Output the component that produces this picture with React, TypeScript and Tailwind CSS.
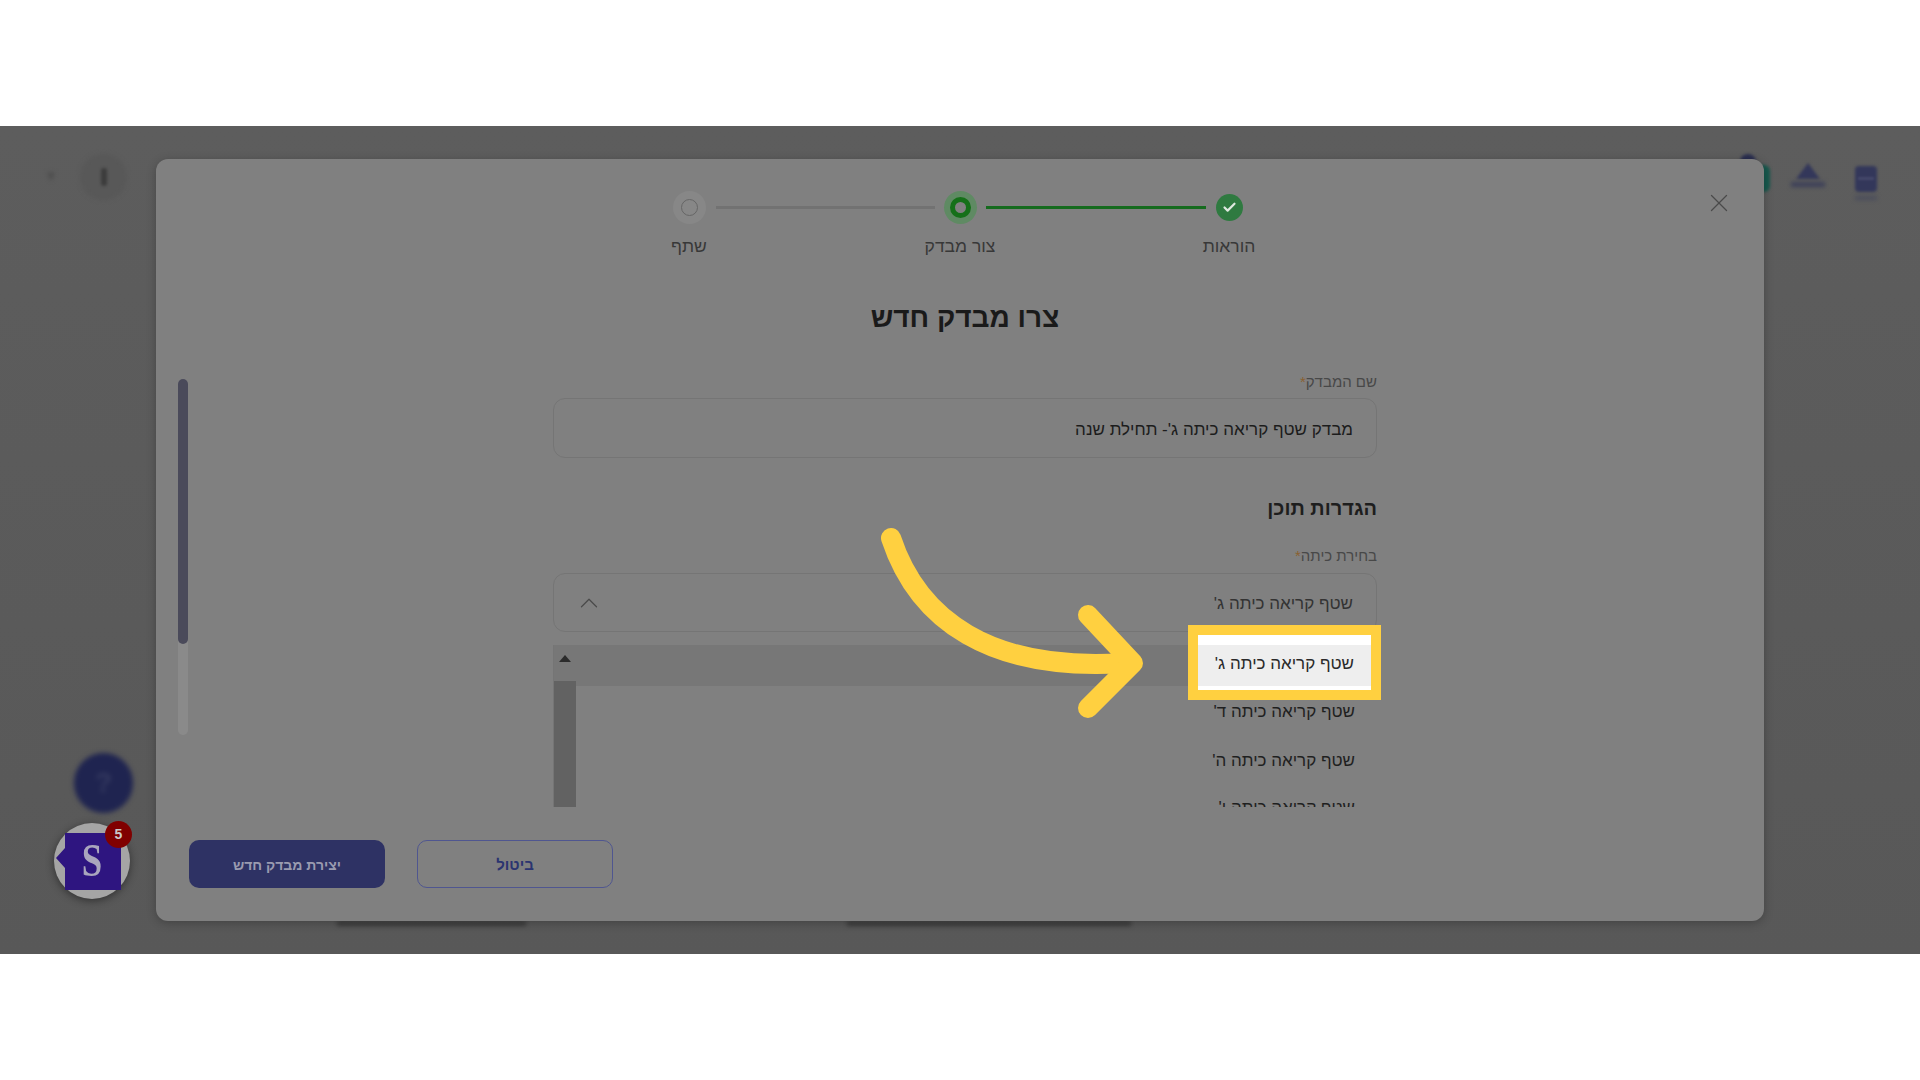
import { X, ChevronUp, Check } from "lucide-react";

const font = { fontFamily: '"Liberation Sans", "Open Sans", "Noto Sans", sans-serif' };

function Step({ label, kind, shift }: { label: string; kind: "todo" | "active" | "done"; shift?: string }) {
  return (
    <div className={`flex w-[50px] shrink-0 flex-col items-center ${shift ?? ""}`}>
      <div className="flex h-[33px] w-[33px] items-center justify-center">
        {kind === "todo" && (
          <div className="flex h-[33px] w-[33px] items-center justify-center rounded-full bg-[#878787]">
            <div className="h-[17px] w-[17px] rounded-full border border-[#666666]" />
          </div>
        )}
        {kind === "active" && (
          <div className="flex h-[33px] w-[33px] items-center justify-center rounded-full bg-[#5f8a63]">
            <div className="h-[21px] w-[21px] rounded-full border-[5px] border-[#157019] bg-[#808080]" />
          </div>
        )}
        {kind === "done" && (
          <div className="flex h-[27px] w-[27px] items-center justify-center rounded-full bg-[#2f7a40]">
            <Check size={15} strokeWidth={3.5} className="text-[#dfe8e0]" />
          </div>
        )}
      </div>
      <div dir="rtl" className="mt-[10px] whitespace-nowrap text-[17.5px] leading-6 text-[#383838]">{label}</div>
    </div>
  );
}

export default function App() {
  return (
    <div style={font} className="flex h-[1080px] w-[1920px] flex-col overflow-hidden bg-white">
      <div className="h-[126px] shrink-0" />
      <div className="relative h-[828px] shrink-0 overflow-hidden bg-gradient-to-b from-[#5d5d5d] to-[#585858]">
        {/* blurred page behind the dialog */}
        <div className="absolute left-[47px] top-[38px] h-[10px] w-[14px] text-[#4c4c4c] blur-[2px]">▾</div>
        <div className="absolute left-[80px] top-[28px] h-[46px] w-[47px] rounded-full bg-[#585858] blur-[2px]" />
        <div className="absolute left-[101px] top-[42px] h-[18px] w-[6px] rounded-full bg-[#3c3c3c] blur-[1.5px]" />
        <div className="absolute left-[1740px] top-[28px] h-[16px] w-[16px] rounded-full bg-[#2a2e50] blur-[1.5px]" />
        <div className="absolute left-[1750px] top-[39px] h-[27px] w-[20px] rounded-md bg-[#17594e] blur-[1.5px]" />
        <div className="absolute left-[1796px] top-[37px] h-0 w-0 border-x-[12px] border-b-[16px] border-x-transparent border-b-[#33375a] blur-[1.5px]" />
        <div className="absolute left-[1791px] top-[56px] h-[5px] w-[34px] bg-[#3c3f58] blur-[2px]" />
        <div className="absolute left-[1855px] top-[40px] h-[26px] w-[22px] rounded-sm bg-[#33375a] blur-[1.5px]" />
        <div className="absolute left-[1858px] top-[51px] h-[3px] w-[16px] bg-[#45486a] blur-[1px]" />
        <div className="absolute left-[1855px] top-[70px] h-[4px] w-[22px] bg-[#4a4d5c] blur-[2px]" />
        <div className="absolute left-[337px] top-[795px] h-[5px] w-[189px] bg-[#3c3c3c] blur-[2px]" />
        <div className="absolute left-[847px] top-[795px] h-[5px] w-[284px] bg-[#3c3c3c] blur-[2px]" />

        {/* dialog */}
        <div className="relative z-10 ml-[156px] mt-[33px] flex h-[762px] w-[1608px] flex-col rounded-[12px] bg-[#808080] shadow-[0_2px_10px_rgba(0,0,0,0.25)]">
          <X size={30} strokeWidth={1} className="absolute right-[30px] top-[29px] text-[#4a4a4a]" />
          <div className="absolute left-[22px] top-[220px] h-[356px] w-[10px] rounded-full bg-[#8a8a8a]">
            <div className="h-[265px] w-[10px] rounded-full bg-[#4a4a5a]" />
          </div>

          <div className="min-h-0 flex-1 overflow-hidden">
            <div className="ml-[508px] flex pt-[32px]">
              <Step label="שתף" kind="todo" />
              <div className="ml-[2px] mt-[15px] h-[3px] w-[219px] bg-[#727272]" />
              <Step label="צור מבדק" kind="active" />
              <div className="ml-px mt-[15px] h-[3px] w-[220px] bg-[#156b1e]" />
              <Step label="הוראות" kind="done" shift="-ml-[2px]" />
            </div>

            <div dir="rtl" className="ml-[397px] w-[824px]">
              <h1 className="mt-[40px] text-center text-[28px] font-bold leading-10 text-[#1a1a1a]">צרו מבדק חדש</h1>
              <div className="mt-[34px] text-[15px] leading-5 text-[#484848]">שם המבדק<span className="text-[#8a6030]">*</span></div>
              <div className="mt-[6px] flex h-[60px] items-center rounded-[12px] border border-[#757575] pr-[23px] pt-[4px] text-[17px] text-[#1c1c1c]">מבדק שטף קריאה כיתה ג'- תחילת שנה</div>
              <h2 className="mt-[36px] text-[20px] font-bold leading-7 text-[#1e1e1e]">הגדרות תוכן</h2>
              <div className="mt-[24px] text-[15px] leading-5 text-[#484848]">בחירת כיתה<span className="text-[#8a6030]">*</span></div>
              <div className="mt-[7px] flex h-[59px] items-center justify-between rounded-[12px] border border-[#757575] pl-[20px] pr-[23px] text-[17px] text-[#333333]">
                <span className="pt-[2px]">שטף קריאה כיתה ג'</span>
                <ChevronUp size={30} strokeWidth={1} className="text-[#4a4a4a]" />
              </div>

              <div className="mt-[13px] h-[200px] overflow-hidden border-l border-[#757575] text-[17px] text-[#1f1f1f]">
                <div className="flex h-[41px] items-center bg-[#777777] pr-[22px]">שטף קריאה כיתה ג'</div>
                <div className="mt-[2px] flex h-[48px] items-center pr-[22px]">שטף קריאה כיתה ד'</div>
                <div className="flex h-[48px] items-center pr-[22px] pt-[1px]">שטף קריאה כיתה ה'</div>
                <div className="flex h-[48px] items-center pr-[22px]">שטף קריאה כיתה ו'</div>
              </div>
            </div>
          </div>

          <div dir="ltr" className="flex h-[114px] shrink-0 gap-[32px] pl-[33px] pt-[33px]">
            <button className="h-[48px] w-[196px] rounded-[10px] bg-[#2e3264] pt-[2px] text-[14px] font-bold text-[#9a9bb0]">יצירת מבדק חדש</button>
            <button className="h-[48px] w-[196px] rounded-[10px] border border-[#4f5690] pt-[2px] text-[15px] font-bold text-[#2b3470]">ביטול</button>
          </div>

          {/* native scrollbar of the open list */}
          <div className="absolute left-[398px] top-[486px] flex h-[162px] w-[22px] flex-col bg-[#626262]">
            <div className="flex h-[36px] items-start justify-center bg-[#777777] pt-[10px]">
              <div className="h-0 w-0 border-x-[6px] border-b-[7px] border-x-transparent border-b-[#2b2b2b]" />
            </div>
          </div>
        </div>

        {/* widgets */}
        <div className="absolute left-[74px] top-[627px] z-20 flex h-[60px] w-[59px] items-center justify-center rounded-full bg-[#1f2450] text-[28px] font-bold text-[#353a60] blur-[2.5px]">?</div>
        <div className="absolute left-[54px] top-[697px] z-20 h-[76px] w-[76px] rounded-full bg-[#a5a5a5] shadow-[0_2px_8px_rgba(0,0,0,0.45)]">
          <svg viewBox="0 0 76 76" className="absolute inset-0 h-[76px] w-[76px]">
            <path d="M11 10 H67 V67 H11 V45 L2 35 L11 25 Z" fill="#2e1580" />
          </svg>
          <div className="absolute inset-0 flex scale-x-[0.8] items-center justify-center text-[46px] font-bold leading-none text-[#a9a5bd]" style={{ fontFamily: '"Liberation Serif", serif' }}>S</div>
          <div className="absolute right-[-2px] top-[-2px] flex h-[27px] w-[27px] items-center justify-center rounded-full bg-[#800000] text-[14px] font-bold text-[#c9c9c9]">5</div>
        </div>

        {/* tutorial callout */}
        <div dir="rtl" className="absolute left-[1188px] top-[499px] z-30 h-[75px] w-[193px] border-[10px] border-[#ffd040] bg-white">
          <div className="mt-[10px] flex h-[41px] items-center bg-[#eeeeee] pb-[4px] pr-[17px] text-[17px] text-[#2a2a2a]">שטף קריאה כיתה ג'</div>
        </div>
        <svg className="absolute left-0 top-0 z-30" width="1920" height="828" viewBox="0 0 1920 828" fill="none">
          <g transform="translate(0 -126)" stroke="#ffd040" strokeWidth="20" strokeLinecap="round" strokeLinejoin="round">
            <path d="M891 538 C 918 620, 990 672, 1125 663" />
            <path d="M1088 615 L1133 663 L1088 708" />
          </g>
        </svg>
      </div>
    </div>
  );
}
